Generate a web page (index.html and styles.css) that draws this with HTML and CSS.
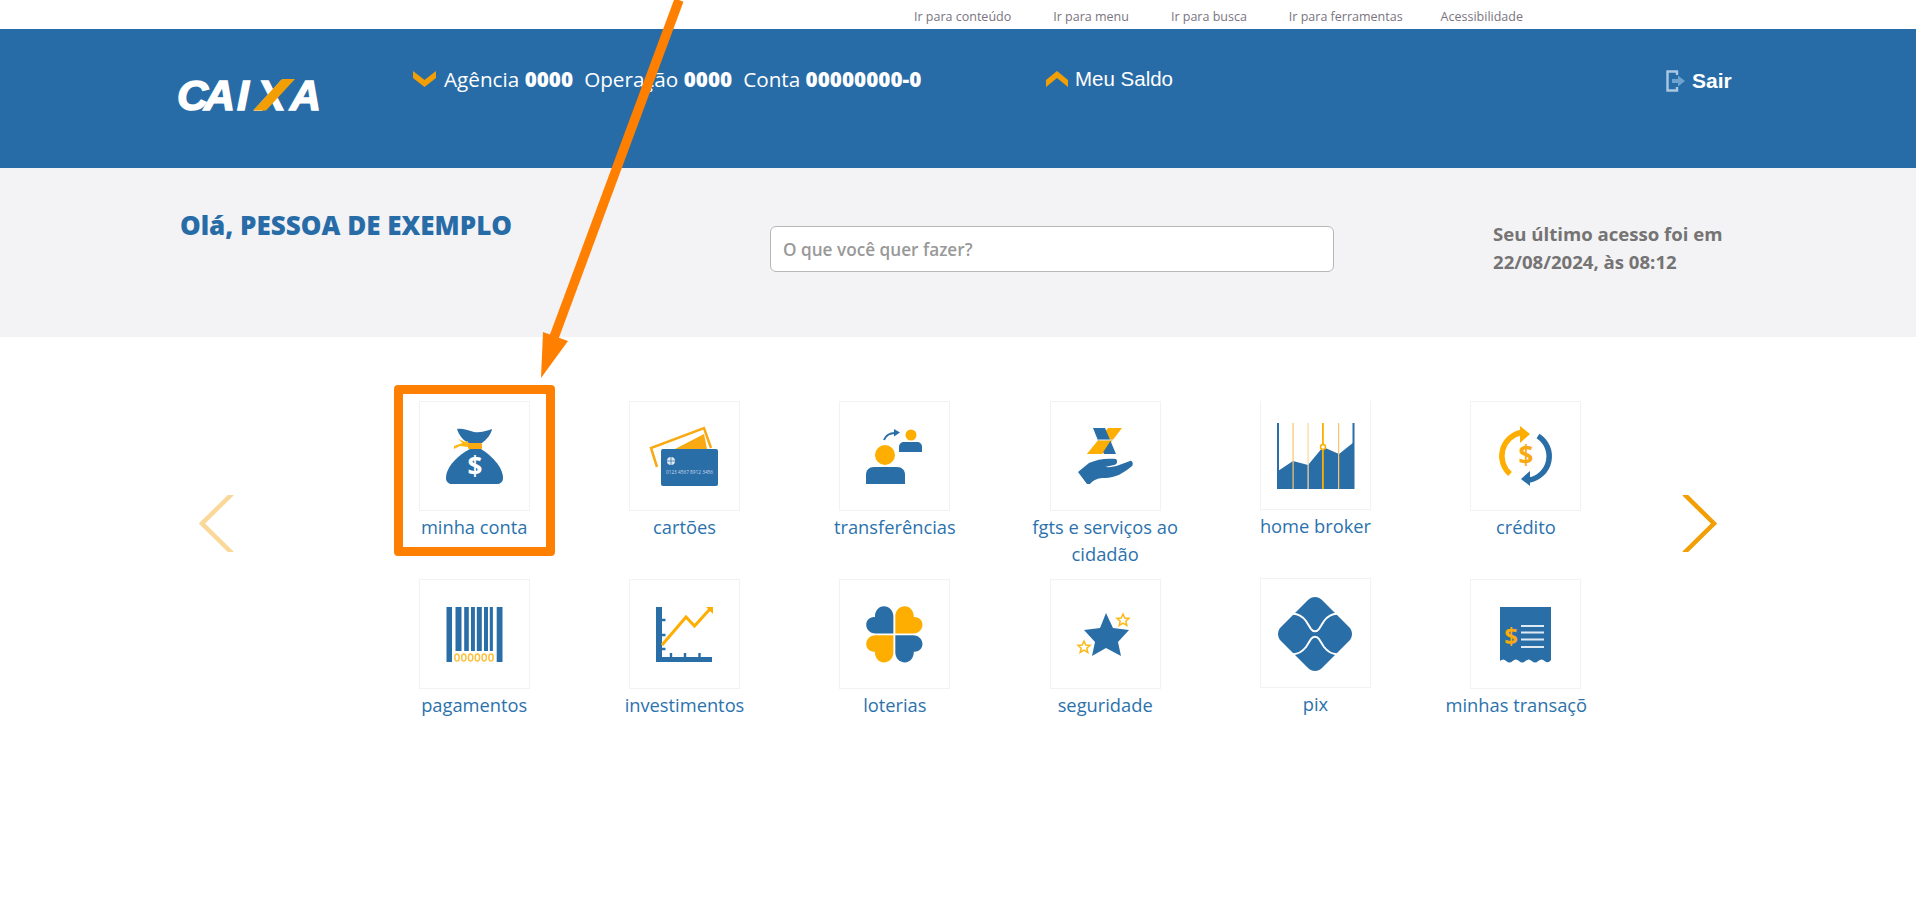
FILE: index.html
```html
<!DOCTYPE html>
<html lang="pt-BR">
<head>
<meta charset="utf-8">
<title>CAIXA</title>
<link rel="stylesheet" href="styles.css">
</head>
<body>
<nav class="topbar">
  <a>Ir para conteúdo</a><a>Ir para menu</a><a>Ir para busca</a><a>Ir para ferramentas</a><a>Acessibilidade</a>
</nav>
<header class="header">
  <svg class="logo" viewBox="0 0 148 40" width="148" height="40" aria-label="CAIXA">
    <text x="0 27 60 80 113" y="35" class="logo-text">CAIXA</text>
    <polygon points="76,35.500 89,35.500 118,4 105,4" fill="#f29f05"/>
  </svg>
  <div class="account">
    <svg class="chev chev-down" width="23" height="16" viewBox="0 0 23 16"><path d="M0 0 L11.500 9 L23 0 V7 L11.500 16 L0 7 Z" fill="#f29f05"/></svg>
    <span>Agência <b>0000</b></span><span>Operação <b>0000</b></span><span>Conta <b>00000000-0</b></span>
  </div>
  <div class="saldo">
    <svg class="chev" width="22" height="16" viewBox="0 0 22 16"><path d="M0 16 L11 7 L22 16 V9 L11 0 L0 9 Z" fill="#f29f05"/></svg>
    <span>Meu Saldo</span>
  </div>
  <div class="sair">
    <svg width="20" height="22" viewBox="0 0 20 22"><path d="M11 5V1.500H1.500v19H11V17" fill="none" stroke="#a9c8e2" stroke-width="2.400"/><path d="M6 9h6V5.500l7 5.500-7 5.500V13H6z" fill="#6fa3cf"/></svg>
    <span>Sair</span>
  </div>
</header>
<section class="welcome">
  <h1 class="hello">Olá, PESSOA DE EXEMPLO</h1>
  <input class="search" type="text" placeholder="O que você quer fazer?">
  <p class="last">Seu último acesso foi em<br>22/08/2024, às 08:12</p>
</section>
<main class="carousel">
  <svg class="nav nav-prev" width="36" height="57" viewBox="0 0 36 57"><path d="M33 -1 L3 28.500 L33 58" fill="none" stroke="#f29f05" stroke-width="4.500"/></svg>
  <div class="viewport">
    <div class="grid">
      <a class="item">
        <span class="box"><svg viewBox="0 0 109 108" width="109" height="108">
          <path d="M37 27c5-1 10 1 17 3 6 1 12-1 18-3-1 6-6 11-10 14H49c-6-2-10-8-12-14z" fill="#2a6ea8"/>
          <path d="M34 44l14-5v6l-8-1-6 3zM38 37l10 4-3 2z" fill="#fdb813"/>
          <rect x="48" y="41" width="14" height="6" rx="1" fill="#f9a912"/>
          <path d="M50 47h11c10 6 22 18 22 29 0 4-3 6-6 6H32c-3 0-6-2-6-6 0-11 12-23 24-29z" fill="#2a6ea8"/>
          <text x="55" y="74" class="dollar dollar-w">$</text>
        </svg></span>
        <span class="label">minha conta</span>
      </a>
      <a class="item">
        <span class="box"><svg viewBox="0 0 109 108" width="109" height="108">
          <path d="M27 65L21 46 74 26l7 20" fill="none" stroke="#f9a912" stroke-width="2.500"/>
          <path d="M45 47l29-15 3 15z" fill="#f9a912"/>
          <rect x="31" y="47" width="57" height="37" rx="2" fill="#2a6ea8"/>
          <circle cx="41" cy="59" r="4" fill="#dfe9f2"/>
          <path d="M41 55v8M37 59h8" stroke="#2a6ea8" stroke-width=".7"/>
          <text x="36" y="72" class="card-num" textLength="47" lengthAdjust="spacingAndGlyphs">0123 4567 8912 3456</text>
        </svg></span>
        <span class="label">cartões</span>
      </a>
      <a class="item">
        <span class="box"><svg viewBox="0 0 109 108" width="109" height="108">
          <circle cx="45" cy="53" r="10" fill="#fdae00"/>
          <path d="M26 82V73c0-5 3-8 8-8h23c5 0 8 3 8 8v9z" fill="#2a6ea8"/>
          <circle cx="71" cy="33" r="5.500" fill="#fdae00"/>
          <path d="M59 50v-5c0-3 2-5 5-5h13c3 0 5 2 5 5v5z" fill="#2a6ea8"/>
          <path d="M44 38c2-5 6-7 11-7" fill="none" stroke="#2a6ea8" stroke-width="2"/>
          <path d="M54 27l6 3.500-6 4z" fill="#2a6ea8"/>
        </svg></span>
        <span class="label">transferências</span>
      </a>
      <a class="item">
        <span class="box"><svg viewBox="0 0 109 108" width="109" height="108">
          <path d="M57 26H71L51 52H36z" fill="#fdae00"/>
          <path d="M42 26H54L65 52H53L46 36z" fill="#2a6ea8"/>
          <path d="M48 38H60L51 52H36z" fill="#fdae00"/>
          <path d="M47 38H62" stroke="#dfe9f2" stroke-width="1"/>
          <path d="M27 70L38 61c8-4 18-5 27-4 2 2 1 6-2 6l-9 2c9 1 17-3 25-6 2-1 4 3 2 5-8 7-17 12-27 12-6 0-11 1-15 6l-3 0z" fill="#2a6ea8"/>
        </svg></span>
        <span class="label">fgts e serviços ao<br>cidadão</span>
      </a>
      <a class="item item-up">
        <span class="box"><svg viewBox="0 0 109 108" width="109" height="108">
          <path d="M17 70L32 60 47 64 62 46 78 53 93 41V88H17z" fill="#2a6ea8"/>
          <rect x="16" y="22" width="2" height="66" fill="#2a6ea8"/>
          <rect x="91.500" y="22" width="2" height="66" fill="#2a6ea8"/>
          <rect x="31.500" y="22" width="1.200" height="66" fill="#f7c66b"/>
          <rect x="46.500" y="22" width="1.200" height="66" fill="#f9d99e"/>
          <rect x="61" y="22" width="1.800" height="66" fill="#fdae00"/>
          <rect x="77" y="22" width="1.200" height="66" fill="#f7c66b"/>
          <circle cx="62" cy="46" r="2.500" fill="#fff" stroke="#fdae00" stroke-width="1.500"/>
        </svg></span>
        <span class="label">home broker</span>
      </a>
      <a class="item">
        <span class="box"><svg viewBox="0 0 109 108" width="109" height="108">
          <path d="M39 72A24 24 0 0 1 50 30.500" fill="none" stroke="#fdae00" stroke-width="5.500"/>
          <path d="M49 24l10 8-10 9z" fill="#fdae00"/>
          <path d="M67 34A24 24 0 0 1 58 78" fill="none" stroke="#2a6ea8" stroke-width="5.500"/>
          <path d="M50 77l9-8v15z" fill="#2a6ea8"/>
          <text x="55" y="63" class="dollar dollar-o">$</text>
        </svg></span>
        <span class="label">crédito</span>
      </a>
      <a class="item">
        <span class="box"><svg viewBox="0 0 109 108" width="109" height="108">
          <g fill="#2a6ea8"><rect x="26.500" y="27" width="5.500" height="55"/><rect x="35.500" y="27" width="6" height="44"/><rect x="44.200" y="27" width="4.600" height="44"/><rect x="51" y="27" width="3.900" height="44"/><rect x="56.800" y="27" width="5" height="44"/><rect x="64" y="27" width="4" height="44"/><rect x="69.800" y="27" width="3.100" height="44"/><rect x="76.700" y="27" width="5.800" height="55"/></g>
          <g fill="#fff" stroke="#fdc13f" stroke-width="1.500"><ellipse cx="37" cy="77.500" rx="2.200" ry="3.500"/><ellipse cx="43.800" cy="77.500" rx="2.200" ry="3.500"/><ellipse cx="50.600" cy="77.500" rx="2.200" ry="3.500"/><ellipse cx="57.400" cy="77.500" rx="2.200" ry="3.500"/><ellipse cx="64.200" cy="77.500" rx="2.200" ry="3.500"/><ellipse cx="71" cy="77.500" rx="2.200" ry="3.500"/></g>
        </svg></span>
        <span class="label">pagamentos</span>
      </a>
      <a class="item">
        <span class="box"><svg viewBox="0 0 109 108" width="109" height="108">
          <path d="M26 27h6v50h50v5H26z" fill="#2a6ea8"/>
          <path d="M32 40h3.500M32 55h3.500M32 69h3.500M41 77v-4M55 77v-4M69.500 77v-4" stroke="#2a6ea8" stroke-width="2.400"/>
          <path d="M32 65L56 37 64.500 46 80 29" fill="none" stroke="#fdae00" stroke-width="3"/>
          <path d="M76 27h7v7z" fill="#fdae00"/>
        </svg></span>
        <span class="label">investimentos</span>
      </a>
      <a class="item">
        <span class="box"><svg viewBox="0 0 109 108" width="109" height="108">
          <g transform="translate(1 1) scale(.97)">
            <path d="M54 54H36c-7 0-10-5-10-9s3-8 8-8h1v-1c0-5 4-10 9-10 6 0 10 5 10 10z" fill="#2a6ea8"/>
            <path d="M56 54h18c7 0 10-5 10-9s-3-8-8-8h-1v-1c0-5-4-10-9-10-6 0-10 5-10 10z" fill="#fdae00"/>
            <path d="M54 56H36c-7 0-10 5-10 9s3 8 8 8h1v1c0 5 4 10 9 10 6 0 10-5 10-10z" fill="#fdae00"/>
            <path d="M56 56h18c7 0 10 5 10 9s-3 8-8 8h-1v1c0 5-4 10-9 10-6 0-10-5-10-10z" fill="#2a6ea8"/>
          </g>
        </svg></span>
        <span class="label">loterias</span>
      </a>
      <a class="item">
        <span class="box"><svg viewBox="0 0 109 108" width="109" height="108">
          <path d="M55 33l7 15 16 2-11 12 3 14-15-8-14 8 3-14-11-12 16-2z" fill="#2a6ea8"/>
          <path d="M72 34l1.800 4 4.200.4-3.200 2.800 1 4.200-3.800-2.200-3.800 2.200 1-4.200-3.200-2.800 4.200-.4z" fill="#fff" stroke="#fdb813" stroke-width="1.500"/>
          <path d="M33 61l1.800 4 4.200.4-3.200 2.800 1 4.200-3.800-2.200-3.800 2.200 1-4.200-3.200-2.800 4.200-.4z" fill="#fff" stroke="#fdb813" stroke-width="1.500"/>
        </svg></span>
        <span class="label">seguridade</span>
      </a>
      <a class="item item-up">
        <span class="box"><svg viewBox="0 0 109 108" width="109" height="108">
          <path d="M47 21c4-4 10-4 14 0l27 27c4 4 4 10 0 14L61 89c-4 4-10 4-14 0L20 62c-4-4-4-10 0-14z" fill="#2a6ea8"/>
          <path d="M30 35c7-1 11 2 15 7l5 8c2 3 6 3 8 0l5-8c4-5 8-8 15-7M30 75c7 1 11-2 15-7l5-8c2-3 6-3 8 0l5 8c4 5 8 8 15 7" fill="none" stroke="#fff" stroke-width="2"/>
        </svg></span>
        <span class="label">pix</span>
      </a>
      <a class="item">
        <span class="box"><svg viewBox="0 0 109 108" width="109" height="108">
          <path d="M29 27H80V80q-3 4-6.400 1q-3-3-6.400 0q-3 3-6.400 0q-3-3-6.400 0q-3 3-6.400 0q-3-3-6.400 0q-3 3-6.400 0q-3-3-6.200 0Z" fill="#2a6ea8"/>
          <path d="M50 46h23M50 52.500h23M50 59.500h23M50 67h23" stroke="#dfe9f2" stroke-width="2"/>
          <text x="40" y="65" class="dollar dollar-o dollar-sm">$</text>
        </svg></span>
        <span class="label">minhas transações</span>
      </a>
    </div>
  </div>
  <svg class="nav nav-next" width="36" height="57" viewBox="0 0 36 57"><path d="M2 -1 L32 28.500 L2 58" fill="none" stroke="#f29f05" stroke-width="4.500"/></svg>
</main>
<svg class="arrow" width="720" height="400" viewBox="0 0 720 400">
  <path d="M679 0L553 340" stroke="#ff8000" stroke-width="9.500" fill="none"/>
  <path d="M541 378L543 332L568 341Z" fill="#ff8000"/>
</svg>
<div class="highlight"></div>
</body>
</html>
```
FILE: styles.css
```css
* { box-sizing: border-box; }
html, body { margin: 0; padding: 0; }
body {
  position: relative;
  height: 915px;
  overflow: hidden;
  background: #fff;
  font-family: "Open Sans", sans-serif;
}
.topbar {
  height: 29px;
  display: flex;
  align-items: center;
  gap: 42px;
  padding: 4px 0 0 914px;
  font-size: 12.5px;
  color: #7a7480;
  white-space: nowrap;
}
.topbar a:last-child { margin-left: -4px; }
.header {
  height: 139px;
  background: #286ca7;
  color: #fff;
  display: flex;
  align-items: flex-start;
  padding-left: 177px;
}
.logo { margin-top: 46px; flex: none; overflow: visible; }
.logo-text {
  font-family: "Liberation Sans", sans-serif;
  font-weight: 700;
  font-style: italic;
  font-size: 43px;
  fill: #fff;
  stroke: #fff;
  stroke-width: 1.5px;
}
.account {
  margin: 36px 0 0 88px;
  width: 633px;
  flex: none;
  display: flex;
  align-items: center;
  font-size: 20.7px;
  line-height: 28px;
  gap: 11px;
}
.chev { flex: none; }
.chev-down { margin-right: -3px; }
.account span { white-space: nowrap; }
.account b { font-weight: 800; }
.saldo {
  margin-top: 38px;
  width: 620px;
  flex: none;
  display: flex;
  align-items: center;
  gap: 7px;
  font: 20.5px "Liberation Sans", sans-serif;
}
.sair {
  margin-top: 40px;
  display: flex;
  align-items: center;
  gap: 6px;
  font: 700 21px "Liberation Sans", sans-serif;
}
.welcome {
  height: 169px;
  background: #f3f3f5;
  display: flex;
  align-items: flex-start;
  padding-left: 180px;
}
.hello {
  margin: 42px 0 0;
  width: 590px;
  flex: none;
  font-size: 26px;
  line-height: 30px;
  font-weight: 800;
  color: #286ca7;
}
.search {
  margin-top: 58px;
  width: 564px;
  height: 46px;
  flex: none;
  border: 1px solid #b8b8b8;
  border-radius: 6px;
  padding: 0 12px;
  font: 600 17.2px "Open Sans", sans-serif;
  background: #fff;
}
.search::placeholder { color: #999; opacity: 1; }
.last {
  margin: 52px 0 0 159px;
  font-size: 18.6px;
  line-height: 28px;
  font-weight: 700;
  color: #757373;
}
.carousel {
  display: flex;
  align-items: flex-start;
  padding: 64px 0 0 199px;
}
.nav { flex: none; margin-top: 94px; }
.nav-prev { opacity: .4; }
.nav-next { margin-left: 94px; }
.viewport {
  margin-left: 134px;
  width: 1219px;
  height: 360px;
  overflow: hidden;
  flex: none;
}
.grid {
  width: 1262px;
  display: grid;
  grid-template-columns: repeat(6, 1fr);
  grid-auto-rows: 178px;
}
.item {
  display: flex;
  flex-direction: column;
  align-items: center;
  color: #2b72ad;
}
.item-up { margin-top: -1px; }
.box {
  width: 111px;
  height: 110px;
  flex: none;
  border: 1px solid #f2f2f3;
  display: block;
}
.box svg { display: block; }
.label {
  margin-top: 2px;
  font-size: 18.3px;
  line-height: 27px;
  text-align: center;
  white-space: nowrap;
}
.dollar {
  font-family: "Open Sans", sans-serif;
  font-weight: 700;
  font-size: 26px;
  text-anchor: middle;
}
.dollar-sm { font-size: 24px; }
.dollar-w { fill: #fff; }
.dollar-o { fill: #f9a912; }
.card-num {
  font-family: "Open Sans", sans-serif;
  font-size: 5px;
  fill: #c7d9e9;
}
.arrow { position: absolute; left: 0; top: 0; pointer-events: none; }
.highlight {
  position: absolute;
  left: 394px;
  top: 385px;
  width: 161px;
  height: 171px;
  border: 9px solid #ff8000;
  border-radius: 4px;
  pointer-events: none;
}
```
